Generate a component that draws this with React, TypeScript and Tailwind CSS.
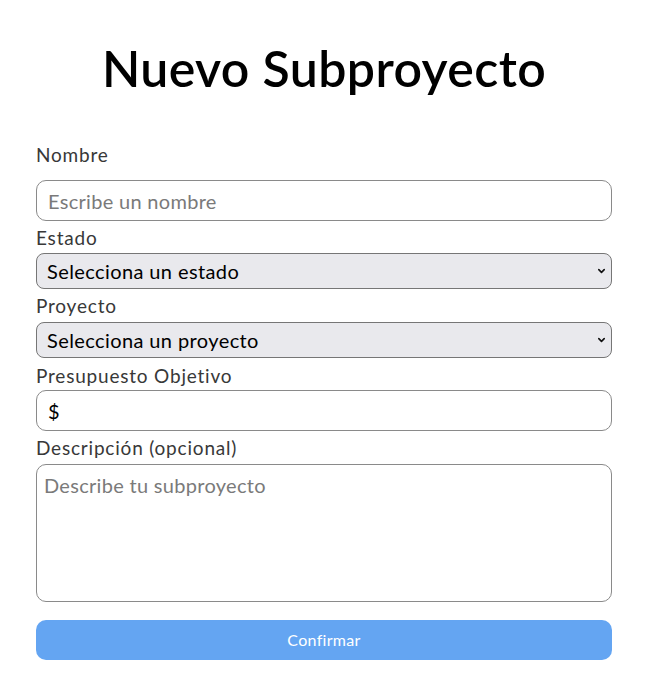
import React from 'react';

const Chevron: React.FC = () => (
  <svg className="pointer-events-none absolute right-[6px] top-1/2 -translate-y-1/2 w-[9px] h-[9px]" viewBox="0 0 10 10" fill="none" stroke="#111" strokeWidth="1.8" strokeLinecap="round" strokeLinejoin="round">
    <polyline points="2 3.5 5 6.5 8 3.5" />
  </svg>
);

const App: React.FC = () => {
  const font = { fontFamily: 'Lato, "Noto Sans", sans-serif' };
  return (
    <div className="min-h-screen bg-white pl-9 pr-10" style={font}>
      <h1 className="text-center text-[50px] leading-[58px] font-semibold text-black pt-[39px] tracking-[0.4px]">Nuevo Subproyecto</h1>

      <form className="mt-[46px] flex flex-col">
        <label className="text-[19px] leading-6 tracking-[0.8px] text-[#383838] mb-[13px]">Nombre</label>
        <input
          type="text"
          placeholder="Escribe un nombre"
          className="h-[41px] w-full rounded-[10px] border border-[#8a8a8a] px-[11px] text-[20px] tracking-[0.3px] text-black placeholder:text-[#7a7a7a] outline-none"
        />

        <label className="text-[19px] leading-6 tracking-[0.8px] text-[#383838] mt-[5px] mb-[3px]">Estado</label>
        <div className="relative">
          <select className="appearance-none h-[36px] w-full rounded-[8px] border border-[#767676] bg-[#e9e9ed] px-[10px] text-[20px] tracking-[0.4px] font-normal text-black outline-none">
            <option>Selecciona un estado</option>
          </select>
          <Chevron />
        </div>

        <label className="text-[19px] leading-6 tracking-[0.8px] text-[#383838] mt-[5px] mb-[4px]">Proyecto</label>
        <div className="relative">
          <select className="appearance-none h-[36px] w-full rounded-[8px] border border-[#767676] bg-[#e9e9ed] px-[10px] text-[20px] tracking-[0.4px] font-normal text-black outline-none">
            <option>Selecciona un proyecto</option>
          </select>
          <Chevron />
        </div>

        <label className="text-[19px] leading-6 tracking-[0.8px] text-[#383838] mt-[6px] mb-[2px]">Presupuesto Objetivo</label>
        <input
          type="text"
          defaultValue="$"
          className="h-[41px] w-full rounded-[10px] border border-[#8a8a8a] px-[11px] text-[20px] text-black outline-none"
        />

        <label className="text-[19px] leading-6 tracking-[0.8px] text-[#383838] mt-[5px] mb-[4px]">Descripción (opcional)</label>
        <textarea
          placeholder="Describe tu subproyecto"
          className="h-[138px] w-full resize-none rounded-[10px] border border-[#8a8a8a] px-[7px] py-[8px] text-[20px] tracking-[0.3px] leading-6 text-black placeholder:text-[#7a7a7a] outline-none"
        />

        <button type="button" className="mt-[18px] h-[40px] w-full rounded-[10px] bg-[#64a5f2] text-[16px] tracking-[0.3px] text-white">
          Confirmar
        </button>
      </form>
    </div>
  );
};

export default App;
